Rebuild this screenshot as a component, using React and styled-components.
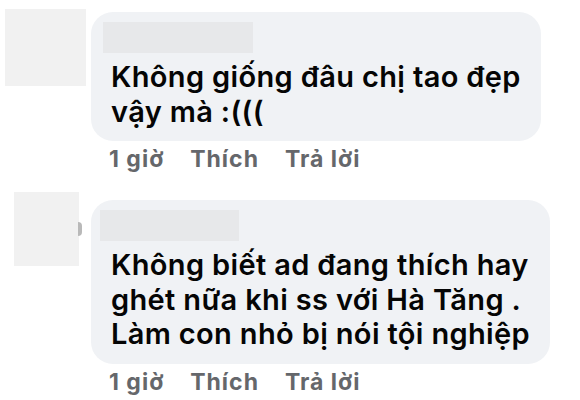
import React from 'react';
import styled, { createGlobalStyle } from 'styled-components';

const GlobalStyle = createGlobalStyle`
  html, body {
    margin: 0;
    background: #ffffff;
  }
  body {
    font-family: Inter, "Noto Sans", "DejaVu Sans", sans-serif;
  }
`;

const comments = [
  {
    id: 1,
    avatar: { w: 81, h: 77, left: 5, top: -3 },
    name: { w: 150, left: 12 },
    lines: ['Không giống đâu chị tao đẹp', 'vậy mà :((('],
  },
  {
    id: 2,
    avatar: { w: 65, h: 74, left: 14, top: -8, dot: true },
    name: { w: 139, left: 9 },
    lines: [
      'Không biết ad đang thích hay',
      'ghét nữa khi ss với Hà Tăng .',
      'Làm con nhỏ bị nói tội nghiệp',
    ],
  },
];

function App() {
  return (
    <>
      <GlobalStyle />
      <Page>
        {comments.map((c) => (
          <Comment key={c.id}>
            <AvatarCol>
              <Avatar $w={c.avatar.w} $h={c.avatar.h} $left={c.avatar.left} $top={c.avatar.top}>
                {c.avatar.dot && <Peek />}
              </Avatar>
            </AvatarCol>
            <Body>
              <Bubble>
                <NameBlur $w={c.name.w} $left={c.name.left} />
                <Text>
                  {c.lines.map((line, i) => (
                    <Line key={`line-${i}`}>{line}</Line>
                  ))}
                </Text>
              </Bubble>
              <Meta>
                <MetaItem>1 giờ</MetaItem>
                <MetaItem>Thích</MetaItem>
                <MetaItem>Trả lời</MetaItem>
              </Meta>
            </Body>
          </Comment>
        ))}
      </Page>
    </>
  );
}

export default App;

const Page = styled.div`
  width: 580px;
  height: 400px;
  overflow: hidden;
  padding-top: 12px;
  box-sizing: border-box;
  display: flex;
  flex-direction: column;
  gap: 29px;
`;

const Comment = styled.div`
  display: grid;
  grid-template-columns: 91px auto;
  align-items: start;
`;

const AvatarCol = styled.div`
  position: relative;
  height: 1px;
`;

const Avatar = styled.div`
  width: ${(p) => p.$w}px;
  height: ${(p) => p.$h}px;
  margin-left: ${(p) => p.$left}px;
  margin-top: ${(p) => p.$top}px;
  background: #f1f1f1;
  position: relative;
`;

const Peek = styled.span`
  position: absolute;
  right: -3px;
  top: 30px;
  width: 4px;
  height: 14px;
  border-radius: 0 4px 4px 0;
  background: #b9b9b9;
`;

const Body = styled.div`
  display: flex;
  flex-direction: column;
  align-items: flex-start;
`;

const Bubble = styled.div`
  background: #f0f2f5;
  border-radius: 22px;
  padding: 10px 20px 12px 20px;
`;

const NameBlur = styled.div`
  width: ${(p) => p.$w}px;
  height: 31px;
  margin-left: ${(p) => p.$left - 20}px;
  background: #e7e8ea;
  margin-bottom: 7px;
`;

const Text = styled.div`
  font-size: 29px;
  font-weight: 600;
  line-height: 34.5px;
  color: #050505;
  letter-spacing: 0.35px;
`;

const Line = styled.div`
  white-space: nowrap;
`;

const Meta = styled.div`
  display: flex;
  gap: 26px;
  margin-top: 6px;
  padding-left: 18px;
`;

const MetaItem = styled.span`
  font-size: 23px;
  font-weight: 700;
  line-height: 24px;
  letter-spacing: 1px;
  color: #65676b;
`;
